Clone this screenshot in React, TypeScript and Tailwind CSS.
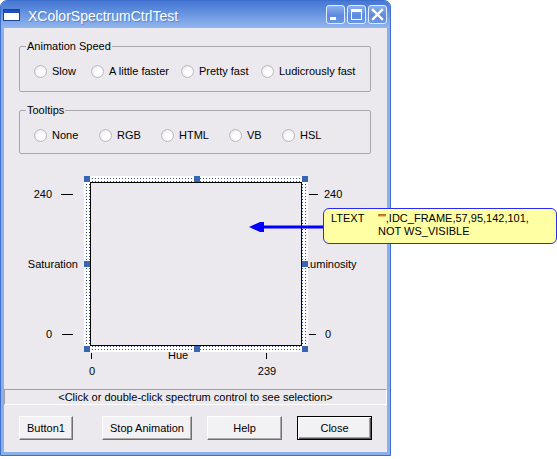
import React from 'react';

const speedOptions = [
  { label: 'Slow', w: 'w-[57px]' },
  { label: 'A little faster', w: 'w-[90px]' },
  { label: 'Pretty fast', w: 'w-[80px]' },
  { label: 'Ludicrously fast', w: '' },
];

const tooltipOptions = [
  { label: 'None', w: 'w-[65px]' },
  { label: 'RGB', w: 'w-[62px]' },
  { label: 'HTML', w: 'w-[68px]' },
  { label: 'VB', w: 'w-[53px]' },
  { label: 'HSL', w: '' },
];

function Radio({ label, className }: { label: string; className?: string }) {
  return (
    <label className={`flex items-center gap-[5px] shrink-0 ${className ?? ''}`}>
      <span className="w-[13px] h-[13px] rounded-full border border-[#B9B9C0] bg-[radial-gradient(circle_at_60%_60%,#ffffff_35%,#DCDCE2_100%)]" />
      <span>{label}</span>
    </label>
  );
}

function GroupBox({
  title,
  options,
  className,
}: {
  title: string;
  options: { label: string; w: string }[];
  className: string;
}) {
  return (
    <fieldset className={`ml-[15px] w-[352px] border border-[#A7A7AD] rounded-[2px] ${className}`}>
      <legend className="ml-[6px] px-[1px] leading-[13px]">{title}</legend>
      <div className="flex pl-[14px] pt-[12px] leading-[13px]">
        {options.map(o => (
          <Radio key={o.label} label={o.label} className={o.w} />
        ))}
      </div>
    </fieldset>
  );
}

function CaptionButton({ kind }: { kind: 'min' | 'max' | 'close' }) {
  return (
    <div className="w-[19px] h-[19px] rounded-[3px] border border-[#E3EBFA] bg-[linear-gradient(to_bottom,#8DB0EC,#5C8ADC_55%,#6B97E2)] flex items-center justify-center">
      <svg width="17" height="17" viewBox="0 0 17 17">
        {kind === 'min' && <rect x="3" y="11" width="6" height="3" fill="#fff" />}
        {kind === 'max' && (
          <>
            <rect x="3.5" y="3.5" width="10" height="10" fill="none" stroke="#fff" strokeWidth="1" />
            <rect x="3" y="3" width="11" height="3" fill="#fff" />
          </>
        )}
        {kind === 'close' && (
          <path d="M4 4 L13 13 M13 4 L4 13" stroke="#fff" strokeWidth="2.4" strokeLinecap="square" />
        )}
      </svg>
    </div>
  );
}

function Handle({ className }: { className: string }) {
  return <span className={`absolute w-[6px] h-[6px] bg-[#3866B2] z-20 ${className}`} />;
}

function Dash({ className }: { className: string }) {
  return <span className={`h-px bg-black ${className}`} />;
}

function PushButton({ label, className, isDefault }: { label: string; className: string; isDefault?: boolean }) {
  return (
    <button
      className={`h-[24px] bg-[#F2F1F4] text-black leading-[20px] ${
        isDefault
          ? 'border border-black shadow-[inset_1px_1px_0_#fff,inset_-1px_-1px_0_#555,inset_-2px_-2px_0_#A0A0A0]'
          : 'border border-t-white border-l-white border-r-[#6F6F6F] border-b-[#6F6F6F] shadow-[inset_-1px_-1px_0_#A8A8A8]'
      } ${className}`}
    >
      {label}
    </button>
  );
}

export default function App() {
  return (
    <div className="w-[557px] h-[459px] bg-white relative overflow-hidden font-['Liberation_Sans',Arial,sans-serif] text-[11px] text-black">
      {/* window */}
      <div className="w-[391px] h-[456px] flex flex-col rounded-t-[7px] border border-[#3F6FCC] bg-[#8AAFEB] overflow-hidden">
        {/* title bar */}
        <div className="h-[27px] shrink-0 flex items-center pl-[2px] pr-[3px] bg-[linear-gradient(to_bottom,#4677D4_0%,#5686DA_25%,#77A0E5_65%,#92B6ED_100%)]">
          <svg width="17" height="12" viewBox="0 0 17 12" className="mt-[1px]">
            <rect x="0.5" y="0.5" width="16" height="11" fill="#fff" stroke="#1F3F9A" />
            <rect x="1" y="1" width="15" height="3" fill="#2350B8" />
          </svg>
          <span className="ml-[8px] text-white text-[14px] leading-[16px] pt-[2px] [text-shadow:1px_1px_0_rgba(30,60,140,0.35)]">
            XColorSpectrumCtrlTest
          </span>
          <div className="ml-auto flex gap-[2px]">
            <CaptionButton kind="min" />
            <CaptionButton kind="max" />
            <CaptionButton kind="close" />
          </div>
        </div>

        {/* client */}
        <div className="flex-1 mx-[3px] mb-[3px] bg-[#EBE9ED] flex flex-col">
          <GroupBox title="Animation Speed" options={speedOptions} className="mt-[12px] pb-[13px]" />
          <GroupBox title="Tooltips" options={tooltipOptions} className="mt-[12px] pb-[11px]" />

          {/* spectrum control */}
          <div className="mt-[22px] flex leading-[13px]">
            <div className="w-[80px] shrink-0 flex flex-col pt-[12px] gap-[57px]">
              <div className="flex items-center justify-end pr-[11px]">
                <span className="mr-[9px]">240</span>
                <Dash className="w-[12px]" />
              </div>
              <div className="flex items-center justify-end pr-[6px]">Saturation</div>
              <div className="flex items-center justify-end pr-[11px]">
                <span className="mr-[10px]">0</span>
                <Dash className="w-[11px]" />
              </div>
            </div>

            <div className="relative z-10 w-[224px] h-[176px] shrink-0 p-[6px] bg-white bg-[linear-gradient(90deg,#fff_2px,transparent_2px),linear-gradient(#fff_2px,#34548E_2px)] bg-[length:3px_3px]">
              <div className="w-full h-full border border-black bg-[#EBE9ED]" />
              <Handle className="top-0 left-0" />
              <Handle className="top-0 left-[110px]" />
              <Handle className="top-0 right-0" />
              <Handle className="top-[85px] left-0" />
              <Handle className="top-[85px] right-0" />
              <Handle className="bottom-0 left-0" />
              <Handle className="bottom-0 left-[110px]" />
              <Handle className="bottom-0 right-0" />
            </div>

            <div className="flex-1 flex flex-col pt-[12px] gap-[57px]">
              <div className="flex items-center">
                <Dash className="ml-[1px] w-[9px]" />
                <span className="ml-[6px]">240</span>
              </div>
              <div className="flex items-center -ml-[4px]">Luminosity</div>
              <div className="flex items-center">
                <Dash className="ml-[1px] w-[7px]" />
                <span className="ml-[9px]">0</span>
              </div>
            </div>
          </div>

          {/* hue axis */}
          <div className="ml-[80px] -mt-[3px] flex flex-col leading-[13px]">
            <div className="flex items-start h-[13px] pl-[7px]">
              <span className="w-px h-[6px] mt-[4px] bg-black" />
              <span className="w-[98px] ml-[76px]">Hue</span>
              <span className="w-px h-[6px] mt-[4px] bg-black" />
            </div>
            <div className="flex mt-[3px]">
              <span className="w-[20px] -ml-[2px] text-center">0</span>
              <span className="w-[30px] ml-[150px] text-center">239</span>
            </div>
          </div>

          {/* status */}
          <div className="mt-[11px] h-[16px] border-t border-l border-t-[#A0A0A0] border-l-[#A0A0A0] border-b border-r border-b-white border-r-white text-center leading-[14px]">
            {'<Click or double-click spectrum control to see selection>'}
          </div>

          {/* buttons */}
          <div className="mt-[11px] flex">
            <PushButton label="Button1" className="ml-[15px] w-[54px]" />
            <PushButton label="Stop Animation" className="ml-[29px] w-[90px]" />
            <PushButton label="Help" className="ml-[15px] w-[75px]" />
            <PushButton label="Close" className="ml-[15px] w-[75px]" isDefault />
          </div>
        </div>
      </div>

      {/* annotation arrow */}
      <svg width="76" height="12" viewBox="0 0 76 12" className="absolute left-[248px] top-[221px] z-30">
        <rect x="14" y="4.5" width="62" height="3" fill="#0000FF" />
        <polygon points="1,6 12,1 16,1 16,11 12,11" fill="#0000FF" />
      </svg>

      {/* annotation callout */}
      <div className="absolute left-[323px] top-[208px] w-[234px] h-[36px] rounded-[6px] border border-[#2A2AF0] bg-[#FFFFA4] z-30 flex pl-[7px] pt-[3px] leading-[12.5px]">
        <span className="w-[47px] shrink-0">LTEXT</span>
        <div className="flex flex-col">
          <span>{'"",IDC_FRAME,57,95,142,101,'}</span>
          <span>NOT WS_VISIBLE</span>
        </div>
      </div>
    </div>
  );
}
